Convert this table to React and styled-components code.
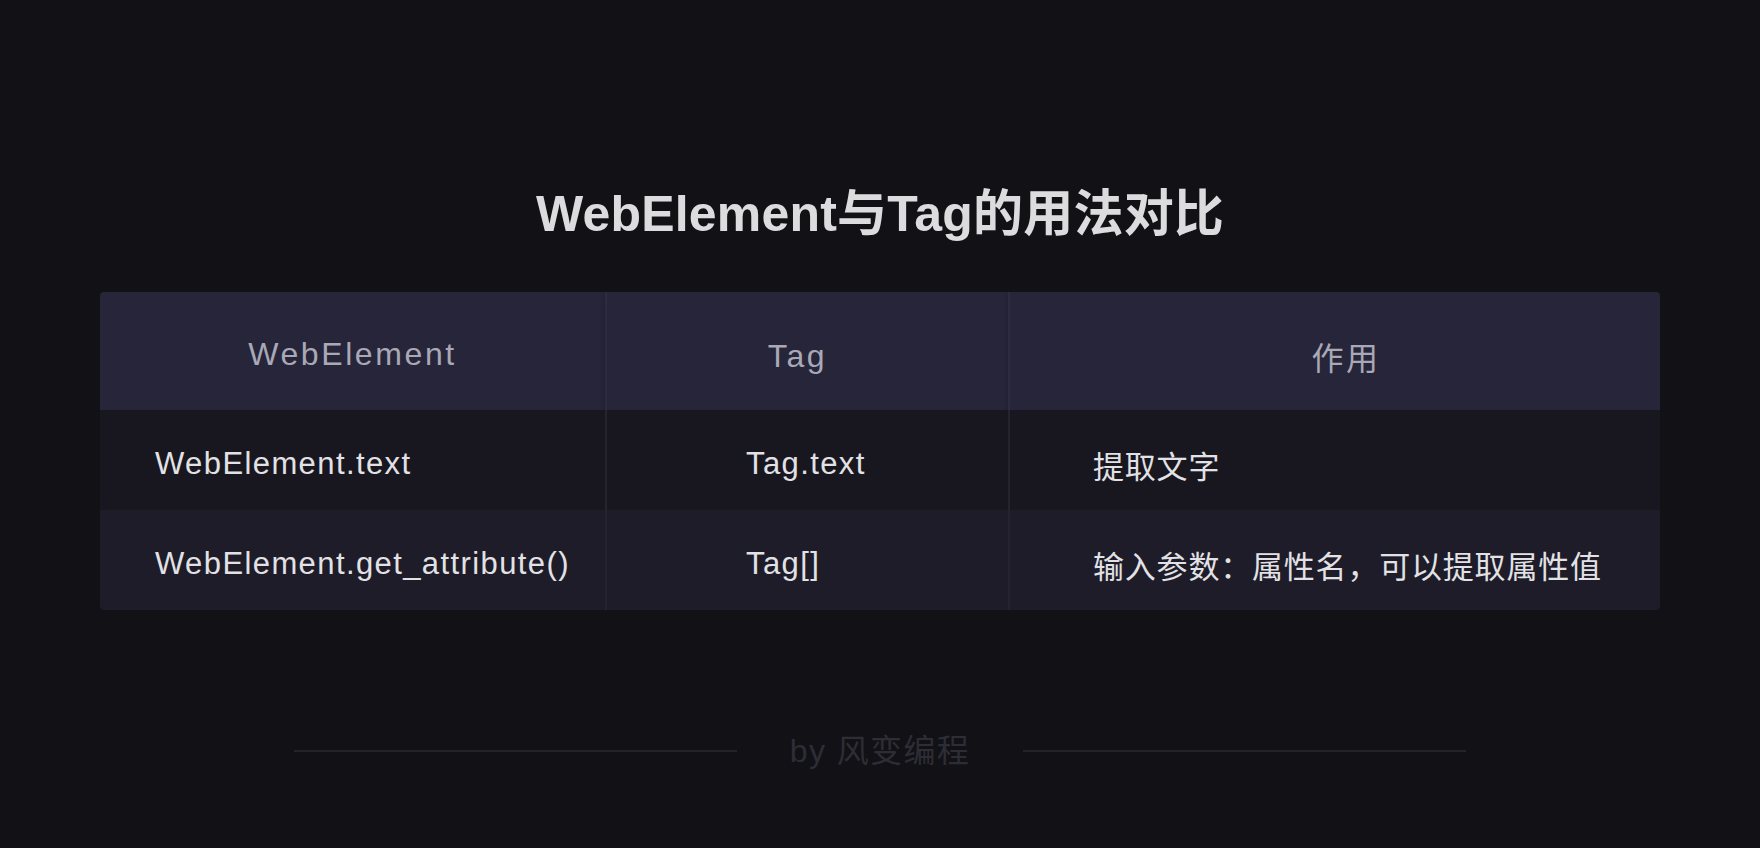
import React from 'react';
import styled, { createGlobalStyle } from 'styled-components';

const GlobalStyle = createGlobalStyle`
  html, body {
    margin: 0;
    padding: 0;
    background: #111116;
  }
  body {
    font-family: "Liberation Sans", "Noto Sans CJK SC", sans-serif;
  }
`;

const Page = styled.div`
  width: 1760px;
  height: 848px;
  box-sizing: border-box;
  padding-top: 180px;
  display: flex;
  flex-direction: column;
  align-items: center;
  background: #111116;
`;

const Title = styled.h1`
  margin: 0;
  font-size: 50px;
  font-weight: 700;
  line-height: 68px;
  color: #dcdcde;
  letter-spacing: 0.2px;
`;

const Table = styled.div`
  margin-top: 44px;
  display: grid;
  grid-template-columns: 505px 403px 652px;
  width: 1560px;
  border-radius: 4px;
  overflow: hidden;
`;

const HeadCell = styled.div`
  height: 118px;
  display: flex;
  align-items: center;
  justify-content: center;
  background: #27253a;
  color: #a9a8b6;
  font-size: 32px;
  letter-spacing: 2.6px;
  padding-top: ${p => p.$down || 0}px;
  padding-left: ${p => Math.max(p.$shift || 0, 0) * 2}px;
  padding-right: ${p => Math.max(-(p.$shift || 0), 0) * 2}px;
  box-sizing: border-box;
  border-left: ${p => (p.$first ? 'none' : '2px solid #2d2b40')};
  box-shadow: 0 3px 4px rgba(0, 0, 0, 0.25);
`;

const Cell = styled.div`
  height: 100px;
  display: flex;
  align-items: center;
  padding-left: ${p => p.$pad}px;
  padding-top: 8px;
  box-sizing: border-box;
  background: ${p => (p.$alt ? '#1d1c28' : '#18171f')};
  color: #e2e2e6;
  font-size: 31px;
  letter-spacing: ${p => (p.$cjk ? '0.8px' : '1.4px')};
  border-left: ${p => (p.$first ? 'none' : '2px solid #24232f')};
`;

const Footer = styled.div`
  margin-top: 115px;
  display: flex;
  align-items: center;
  gap: 53px;
`;

const Rule = styled.div`
  width: 443px;
  height: 2px;
  background: #24232a;
`;

const Credit = styled.span`
  font-size: 32px;
  color: #2e2d35;
  letter-spacing: 1.4px;
  padding-bottom: 5px;
`;

const pads = [55, 139, 83];

const rows = [
  ['WebElement.text', 'Tag.text', '提取文字'],
  ['WebElement.get_attribute()', 'Tag[]', '输入参数：属性名，可以提取属性值'],
];

export default function App() {
  return (
    <Page>
      <GlobalStyle />
      <Title>WebElement与Tag的用法对比</Title>
      <Table>
        <HeadCell $first $down={6}>WebElement</HeadCell>
        <HeadCell $down={10} $shift={-10}>Tag</HeadCell>
        <HeadCell $down={10} $shift={11}>作用</HeadCell>
        {rows.map((row, i) =>
          row.map((text, j) => (
            <Cell
              key={i + '-' + j}
              $alt={i % 2 === 1}
              $first={j === 0}
              $cjk={j === 2}
              $pad={pads[j]}
            >
              {text}
            </Cell>
          ))
        )}
      </Table>
      <Footer>
        <Rule />
        <Credit>by 风变编程</Credit>
        <Rule />
      </Footer>
    </Page>
  );
}
